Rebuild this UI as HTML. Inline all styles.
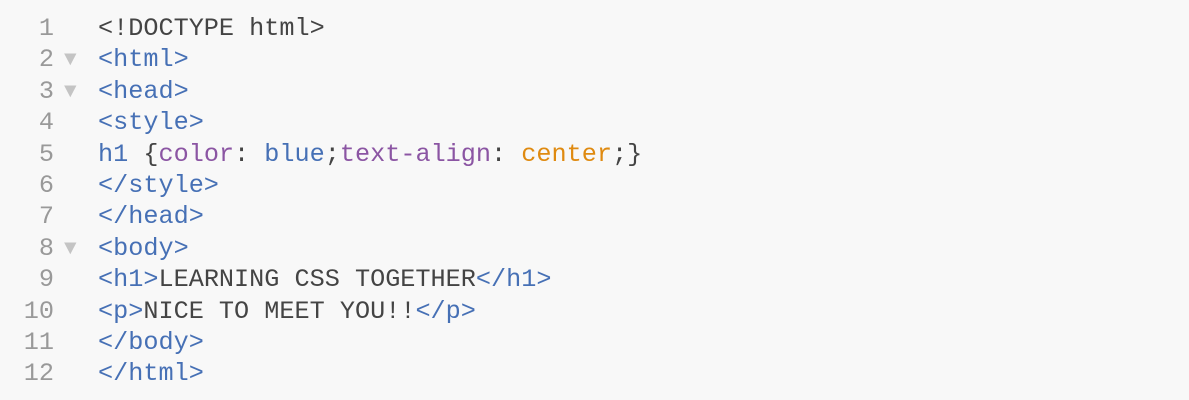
<!DOCTYPE html>
<html><head><style>
body{margin:0;background:#f8f8f8;width:1189px;height:400px;overflow:hidden}
.c{position:absolute;top:13px;left:0;width:1189px;font-family:"Liberation Mono",monospace;font-size:25.2px;line-height:31.4px;color:#444}
.l{position:relative;height:31.4px;white-space:pre}
.n{position:absolute;left:0;width:54px;color:#999;text-align:right}
.t{position:absolute;left:64px;top:1px;color:#c4c4c4;font-size:21px}
.x{position:absolute;left:98px}
.b{color:#4670b5}.p{color:#8b55a3}.o{color:#df8a10}
</style></head><body><div class="c">
<div class="l"><span class="n">1</span><span class="x">&lt;!DOCTYPE html&gt;</span></div>
<div class="l"><span class="n">2</span><span class="t">▼</span><span class="x b">&lt;html&gt;</span></div>
<div class="l"><span class="n">3</span><span class="t">▼</span><span class="x b">&lt;head&gt;</span></div>
<div class="l"><span class="n">4</span><span class="x b">&lt;style&gt;</span></div>
<div class="l"><span class="n">5</span><span class="x"><span class="b">h1</span> {<span class="p">color</span>: <span class="b">blue</span>;<span class="p">text-align</span>: <span class="o">center</span>;}</span></div>
<div class="l"><span class="n">6</span><span class="x b">&lt;/style&gt;</span></div>
<div class="l"><span class="n">7</span><span class="x b">&lt;/head&gt;</span></div>
<div class="l"><span class="n">8</span><span class="t">▼</span><span class="x b">&lt;body&gt;</span></div>
<div class="l"><span class="n">9</span><span class="x"><span class="b">&lt;h1&gt;</span>LEARNING CSS TOGETHER<span class="b">&lt;/h1&gt;</span></span></div>
<div class="l"><span class="n">10</span><span class="x"><span class="b">&lt;p&gt;</span>NICE TO MEET YOU!!<span class="b">&lt;/p&gt;</span></span></div>
<div class="l"><span class="n">11</span><span class="x b">&lt;/body&gt;</span></div>
<div class="l"><span class="n">12</span><span class="x b">&lt;/html&gt;</span></div>
</div></body></html>
